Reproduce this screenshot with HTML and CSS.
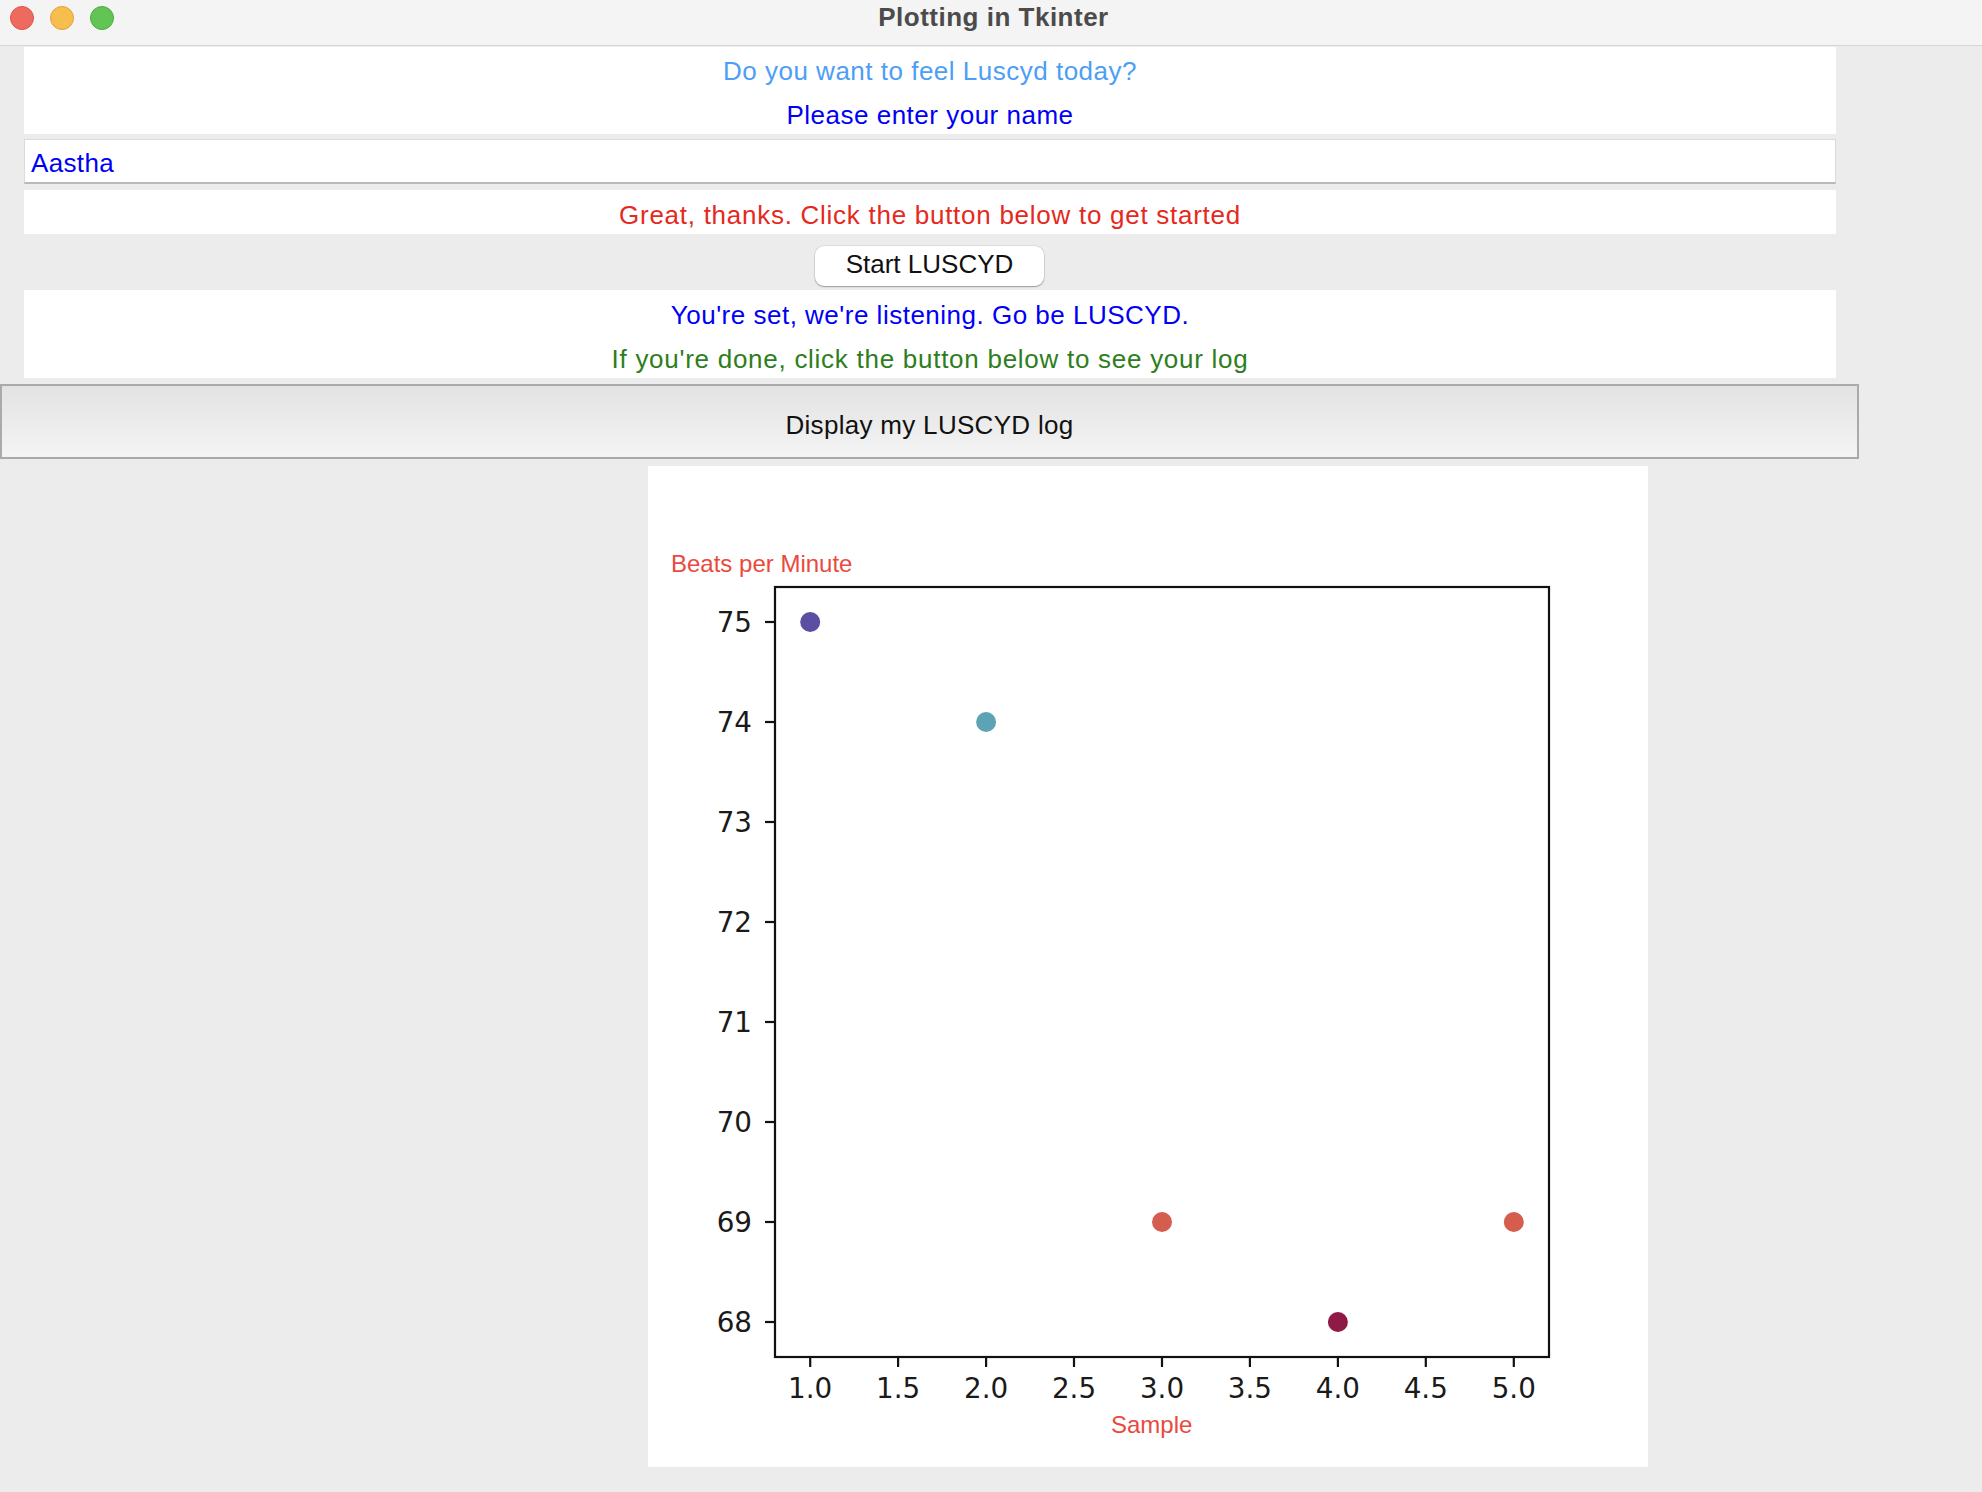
FILE: index.html
```html
<!DOCTYPE html>
<html lang="en">
<head>
<meta charset="utf-8">
<title>Plotting in Tkinter</title>
<link rel="stylesheet" href="styles.css">
</head>
<body>
<div class="window">
  <header class="titlebar">
    <div class="lights">
      <span class="light light-red"></span>
      <span class="light light-yellow"></span>
      <span class="light light-green"></span>
    </div>
    <div class="title">Plotting in Tkinter</div>
    <div class="spacer"></div>
  </header>
  <main class="content">
    <section class="panel panel-intro">
      <div class="line c-lightblue">Do you want to feel Luscyd today?</div>
      <div class="line c-blue">Please enter your name</div>
    </section>
    <div class="entry">Aastha</div>
    <section class="panel panel-great">
      <div class="line line-wide c-red">Great, thanks. Click the button below to get started</div>
    </section>
    <button class="btn-start" type="button">Start LUSCYD</button>
    <section class="panel panel-set">
      <div class="line c-blue">You're set, we're listening. Go be LUSCYD.</div>
      <div class="line line-wide c-green">If you're done, click the button below to see your log</div>
    </section>
    <button class="btn-display" type="button">Display my LUSCYD log</button>
    <figure class="chart">
      <svg class="plot" width="1000" height="1001" viewBox="0 0 1000 1001">
        <text class="axis-title" x="23" y="106">Beats per Minute</text>
        <rect class="spine" x="127" y="121" width="774" height="770"/>
        <g class="ticks">
          <line x1="117" y1="156" x2="127" y2="156"/>
          <line x1="117" y1="256" x2="127" y2="256"/>
          <line x1="117" y1="356" x2="127" y2="356"/>
          <line x1="117" y1="456" x2="127" y2="456"/>
          <line x1="117" y1="556" x2="127" y2="556"/>
          <line x1="117" y1="656" x2="127" y2="656"/>
          <line x1="117" y1="756" x2="127" y2="756"/>
          <line x1="117" y1="856" x2="127" y2="856"/>
          <line x1="162.2" y1="891" x2="162.2" y2="901"/>
          <line x1="250.1" y1="891" x2="250.1" y2="901"/>
          <line x1="338.1" y1="891" x2="338.1" y2="901"/>
          <line x1="426" y1="891" x2="426" y2="901"/>
          <line x1="514" y1="891" x2="514" y2="901"/>
          <line x1="601.9" y1="891" x2="601.9" y2="901"/>
          <line x1="689.9" y1="891" x2="689.9" y2="901"/>
          <line x1="777.8" y1="891" x2="777.8" y2="901"/>
          <line x1="865.8" y1="891" x2="865.8" y2="901"/>
        </g>
        <g class="ylabels">
          <text x="104" y="166">75</text>
          <text x="104" y="266">74</text>
          <text x="104" y="366">73</text>
          <text x="104" y="466">72</text>
          <text x="104" y="566">71</text>
          <text x="104" y="666">70</text>
          <text x="104" y="766">69</text>
          <text x="104" y="866">68</text>
        </g>
        <g class="xlabels">
          <text x="162.2" y="932">1.0</text>
          <text x="250.1" y="932">1.5</text>
          <text x="338.1" y="932">2.0</text>
          <text x="426" y="932">2.5</text>
          <text x="514" y="932">3.0</text>
          <text x="601.9" y="932">3.5</text>
          <text x="689.9" y="932">4.0</text>
          <text x="777.8" y="932">4.5</text>
          <text x="865.8" y="932">5.0</text>
        </g>
        <text class="axis-title" x="463" y="967">Sample</text>
        <circle class="pt" cx="162.2" cy="156" r="10" fill="#5a4fa3"/>
        <circle class="pt" cx="338.1" cy="256" r="10" fill="#5ea3b3"/>
        <circle class="pt" cx="514" cy="756" r="10" fill="#d45d4e"/>
        <circle class="pt" cx="689.9" cy="856" r="10" fill="#8f1a45"/>
        <circle class="pt" cx="865.8" cy="756" r="10" fill="#d45d4e"/>
      </svg>
    </figure>
  </main>
</div>
</body>
</html>
```

FILE: styles.css
```css
html, body {
  margin: 0;
  padding: 0;
}

body {
  width: 1982px;
  height: 1492px;
  overflow: hidden;
  background: #ececec;
  font-family: "Liberation Sans", Arial, sans-serif;
}

.titlebar {
  height: 45px;
  background: #f4f4f4;
  border-bottom: 1px solid #d6d6d6;
  display: grid;
  grid-template-columns: 1fr auto 1fr;
}

.lights {
  display: flex;
  gap: 16px;
  padding: 6px 0 0 10px;
}

.light {
  width: 24px;
  height: 24px;
  border-radius: 50%;
  box-sizing: border-box;
  border: 1px solid transparent;
}

.light-red { background: #ee6a5e; border-color: #d9564b; }
.light-yellow { background: #f6be4f; border-color: #dfa23a; }
.light-green { background: #61c454; border-color: #4fab40; }

.title {
  font-weight: 700;
  font-size: 26px;
  letter-spacing: 0.5px;
  line-height: 29px;
  padding: 3px 0 0 5px;
  color: #4b4b4b;
}

.content {
  width: 1859px;
  padding-top: 1px;
  display: flex;
  flex-direction: column;
  align-items: flex-start;
}

.panel {
  margin-left: 24px;
  width: 1812px;
  box-sizing: border-box;
  background: #ffffff;
  text-align: center;
  font-size: 26px;
  letter-spacing: 0.5px;
}

.line {
  line-height: 29px;
}

.line-wide {
  letter-spacing: 0.73px;
}

.c-lightblue { color: #4d9ef5; }
.c-blue { color: #0000f6; }
.c-red { color: #e5291d; }
.c-green { color: #2d7e1c; }

.panel-intro {
  height: 87px;
  padding-top: 10px;
}

.panel-intro .line + .line {
  margin-top: 15px;
}

.entry {
  margin: 5px 0 0 24px;
  width: 1812px;
  height: 45px;
  box-sizing: border-box;
  background: #ffffff;
  border: 1px solid #dadada;
  border-bottom: 2px solid #b9b9b9;
  padding: 8.5px 0 0 6px;
  font-size: 26px;
  line-height: 29px;
  letter-spacing: 0.35px;
  color: #0000f6;
}

.panel-great {
  margin-top: 6px;
  height: 44px;
  padding-top: 11px;
}

.btn-start {
  align-self: center;
  margin-top: 12px;
  width: 229px;
  height: 40px;
  box-sizing: border-box;
  padding: 4px 0 7px;
  border: none;
  border-radius: 9px;
  background: #ffffff;
  box-shadow: 0 0 0 0.5px rgba(0, 0, 0, 0.12), 0 1px 1.5px rgba(0, 0, 0, 0.3);
  font-family: "Liberation Sans", Arial, sans-serif;
  font-size: 26px;
  line-height: 29px;
  color: #111111;
}

.panel-set {
  margin-top: 4px;
  height: 88px;
  padding-top: 10.5px;
}

.panel-set .line + .line {
  margin-top: 15px;
}

.btn-display {
  margin-top: 6px;
  width: 1859px;
  height: 75px;
  box-sizing: border-box;
  padding: 25px 0 17px;
  border: 2px solid #aaaaaa;
  border-radius: 0;
  background: linear-gradient(#e3e3e3, #ebebeb 50%, #f4f4f4);
  font-family: "Liberation Sans", Arial, sans-serif;
  font-size: 26px;
  line-height: 29px;
  letter-spacing: 0.3px;
  color: #111111;
}

.chart {
  margin: 7px 0 0 648px;
  width: 1000px;
  height: 1001px;
  background: #ffffff;
}

.plot {
  display: block;
}

.axis-title {
  font-family: "Liberation Sans", Arial, sans-serif;
  font-size: 24px;
  fill: #ea4a3e;
}

.spine {
  fill: none;
  stroke: #111111;
  stroke-width: 2.2;
}

.ticks line {
  stroke: #111111;
  stroke-width: 2.2;
}

.ylabels text,
.xlabels text {
  font-family: "DejaVu Sans", sans-serif;
  font-size: 27.8px;
  fill: #1a1a1a;
}

.ylabels text {
  text-anchor: end;
}

.xlabels text {
  text-anchor: middle;
}
```
